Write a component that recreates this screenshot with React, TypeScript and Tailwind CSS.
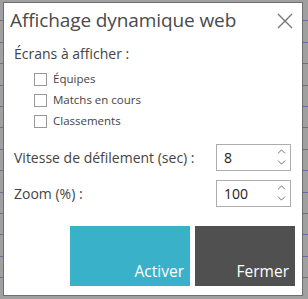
import { ChevronUp, ChevronDown } from "lucide-react";

const SCREENS = ["Équipes", "Matchs en cours", "Classements"];

function Spin({ value }: { value: string }) {
  return (
    <div className="w-[75px] h-[27px] border border-[#adadad] bg-white flex items-center justify-between pl-[7px] pr-[2px]">
      <span className="text-[14px] text-[#222]">{value}</span>
      <div className="flex flex-col items-center text-[#555] -space-y-[2px]">
        <ChevronUp size={13} strokeWidth={1.5} />
        <ChevronDown size={13} strokeWidth={1.5} />
      </div>
    </div>
  );
}

export default function App() {
  return (
    <div
      className="w-[308px] h-[299px] pt-[2px] pl-[3px] bg-[#a0a0a0] bg-[repeating-linear-gradient(to_bottom,#a0a0a0_0px,#a0a0a0_20.4px,#6c6c9c_20.4px,#6c6c9c_21.4px)] overflow-hidden"
      style={{ fontFamily: '"Open Sans", "Noto Sans", sans-serif' }}
    >
      <div className="w-[300px] h-[294px] bg-white border border-[#6e6e6e] flex flex-col">
        <div className="flex items-start justify-between pl-[6px] pr-[9px] pt-[3px]">
          <h1 className="text-[19px] text-[#4a4a4a] tracking-[-0.1px]">Affichage dynamique web</h1>
          <svg width="16" height="16" viewBox="0 0 16 16" className="mt-[7px]">
            <path d="M1 1 L15 15 M15 1 L1 15" stroke="#777" strokeWidth="1.4" fill="none" />
          </svg>
        </div>

        <div className="pl-[10px] mt-[8px]">
          <p className="text-[14px] text-[#444]">Écrans à afficher :</p>
          <div className="mt-[8px] pl-[20px] flex flex-col gap-[6px]">
            {SCREENS.map((s) => (
              <label key={s} className="flex items-center gap-[6px] h-[15px]">
                <span className="w-[13px] h-[13px] border border-[#999] bg-white" />
                <span className="text-[11.5px] text-[#444]">{s}</span>
              </label>
            ))}
          </div>
        </div>

        <div className="mt-[15px] pl-[10px] pr-[11px] flex flex-col gap-[9px]">
          <div className="flex items-center justify-between">
            <span className="text-[14px] text-[#444]">Vitesse de défilement (sec) :</span>
            <Spin value="8" />
          </div>
          <div className="flex items-center justify-between">
            <span className="text-[14px] text-[#444]">Zoom (%) :</span>
            <Spin value="100" />
          </div>
        </div>

        <div className="mt-[19px] flex justify-end gap-[5px] pr-[7px]">
          <button className="w-[120px] h-[60px] bg-[#38b1c9] text-white text-[15.5px] flex items-end justify-end px-[6px] pb-[2px]">
            Activer
          </button>
          <button className="w-[100px] h-[60px] bg-[#505050] text-white text-[15.5px] flex items-end justify-end px-[6px] pb-[2px]">
            Fermer
          </button>
        </div>
      </div>
    </div>
  );
}
